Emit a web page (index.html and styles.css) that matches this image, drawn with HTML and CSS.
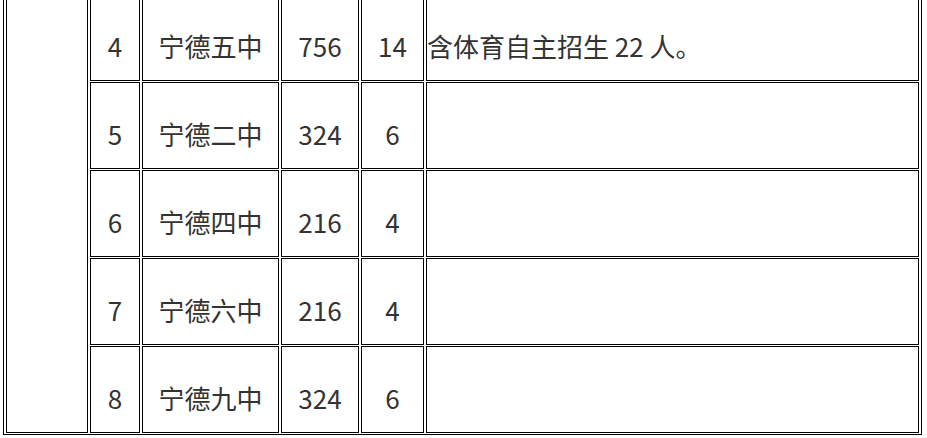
FILE: index.html
```html
<!DOCTYPE html>
<html lang="zh-CN">
<head>
<meta charset="utf-8">
<title>招生计划</title>
<link rel="stylesheet" href="styles.css">
</head>
<body>
<table class="plan">
  <tbody>
    <tr>
      <td class="side" rowspan="5"></td>
      <td class="c-no">4</td>
      <td class="c-name">宁德五中</td>
      <td class="c-total">756</td>
      <td class="c-cls">14</td>
      <td class="c-note">含体育自主招生 22 人。</td>
    </tr>
    <tr>
      <td class="c-no">5</td>
      <td class="c-name">宁德二中</td>
      <td class="c-total">324</td>
      <td class="c-cls">6</td>
      <td class="c-note"></td>
    </tr>
    <tr>
      <td class="c-no">6</td>
      <td class="c-name">宁德四中</td>
      <td class="c-total">216</td>
      <td class="c-cls">4</td>
      <td class="c-note"></td>
    </tr>
    <tr>
      <td class="c-no">7</td>
      <td class="c-name">宁德六中</td>
      <td class="c-total">216</td>
      <td class="c-cls">4</td>
      <td class="c-note"></td>
    </tr>
    <tr>
      <td class="c-no">8</td>
      <td class="c-name">宁德九中</td>
      <td class="c-total">324</td>
      <td class="c-cls">6</td>
      <td class="c-note"></td>
    </tr>
  </tbody>
</table>
</body>
</html>
```
FILE: styles.css
```css
html, body {
  margin: 0;
  padding: 0;
  background: #ffffff;
  overflow: hidden;
}

body {
  font-family: "Noto Sans CJK SC", "Noto Sans", sans-serif;
  color: #333333;
}

.plan {
  margin: -8px 0 0 3px;
  border: 1px solid #000000;
  border-collapse: separate;
  border-spacing: 2px 1px;
  font-size: 26px;
  line-height: 1.4;
}

.plan td {
  border: 1px solid #000000;
  height: 67px;
  padding: 18px 0 0 0;
  vertical-align: middle;
  text-align: center;
  white-space: nowrap;
}

.plan td.side {
  width: 80px;
  padding: 0;
}

.plan .c-no { width: 48px; }
.plan .c-name { width: 135px; }
.plan .c-total { width: 76px; }
.plan .c-cls { width: 61px; }
.plan .c-note {
  width: 491px;
  text-align: left;
}
```
